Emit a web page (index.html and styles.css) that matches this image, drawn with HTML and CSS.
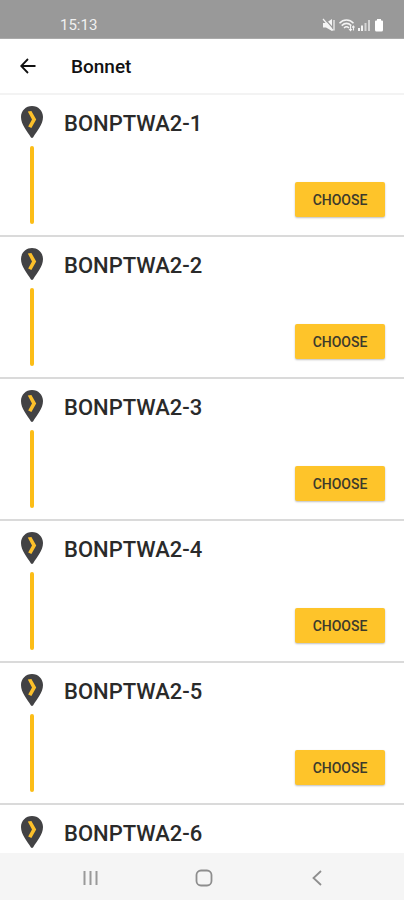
FILE: index.html
```html
<!DOCTYPE html>
<html lang="en">
<head>
<meta charset="utf-8">
<meta name="viewport" content="width=device-width, initial-scale=1">
<title>Bonnet</title>
<link rel="stylesheet" href="styles.css">
</head>
<body>
<svg class="defs" aria-hidden="true">
  <symbol id="pin" viewBox="0 0 22 32">
    <path d="M11 0C4.800 0 0 4.900 0 11c0 7.500 6 14 9.800 20.200q1.200 1.600 2.400 0C16 25 22 18.500 22 11 22 4.900 17.200 0 11 0z" fill="#424244"/>
    <path d="M6.800 5.500l3.600-.5 4.800 8.500-4.800 8.500-3.200-1.500 3.800-7z" fill="#fcc02a"/>
  </symbol>
</svg>
<div class="app">
  <div class="status">
    <span class="clock">15:13</span>
    <svg class="status-icons" viewBox="0 0 62 16" aria-hidden="true">
      <path d="M1 6h3l6-4v12l-6-3.500H1z" fill="#f4f4f4"/>
      <path d="M2 1l10 11.500" stroke="#999" stroke-width="1.200"/>
      <path d="M1 2l10 11.500M12 3v10.500" stroke="#f4f4f4" stroke-width="1.200" fill="none"/>
      <path d="M17.500 6.200c4-4.200 10-4.200 14 0M19.700 8.600c3-2.800 6.600-2.800 9.600 0M22 11c1.500-1.400 3.500-1.400 5 0" stroke="#f4f4f4" stroke-width="1.500" fill="none"/>
      <path d="M28.500 8v5.500M27 12l1.500 1.700L30 12M31.500 13.500V9M30 10.500L31.500 9l1 1.500" stroke="#f4f4f4" stroke-width="1.100" fill="none"/>
      <path d="M36 11h2v3h-2zM39 8.500h2V14h-2z" fill="#f4f4f4"/>
      <path d="M42.500 6h2v8h-2zM46 3h2v11h-2z" fill="#d4d4d4"/>
      <path d="M55 2h4v1.500h1q1 0 1 1V13q0 1.500-1.500 1.500h-5Q53 14.500 53 13V4.500q0-1 1-1h1z" fill="#fff"/>
    </svg>
  </div>
  <header class="bar">
    <button class="back" type="button" aria-label="Back">
      <svg viewBox="0 0 16 16" aria-hidden="true"><path d="M15.500 8H1.500M8 1L1.200 8 8 15" fill="none" stroke="#111" stroke-width="1.800"/></svg>
    </button>
    <h1>Bonnet</h1>
  </header>
  <main class="list">
    <section class="item">
      <div class="rail"><svg class="pin"><use href="#pin"/></svg><span class="line"></span></div>
      <h2>BONPTWA2-1</h2><button class="choose" type="button">CHOOSE</button>
    </section>
    <section class="item">
      <div class="rail"><svg class="pin"><use href="#pin"/></svg><span class="line"></span></div>
      <h2>BONPTWA2-2</h2><button class="choose" type="button">CHOOSE</button>
    </section>
    <section class="item">
      <div class="rail"><svg class="pin"><use href="#pin"/></svg><span class="line"></span></div>
      <h2>BONPTWA2-3</h2><button class="choose" type="button">CHOOSE</button>
    </section>
    <section class="item">
      <div class="rail"><svg class="pin"><use href="#pin"/></svg><span class="line"></span></div>
      <h2>BONPTWA2-4</h2><button class="choose" type="button">CHOOSE</button>
    </section>
    <section class="item">
      <div class="rail"><svg class="pin"><use href="#pin"/></svg><span class="line"></span></div>
      <h2>BONPTWA2-5</h2><button class="choose" type="button">CHOOSE</button>
    </section>
    <section class="item">
      <div class="rail"><svg class="pin"><use href="#pin"/></svg></div>
      <h2>BONPTWA2-6</h2>
    </section>
  </main>
  <nav class="nav">
    <button type="button" aria-label="Recent apps"><svg viewBox="0 0 18 18"><path d="M2.500 2v14M8.500 2v14M14.500 2v14" stroke="#999" stroke-width="2"/></svg></button>
    <button type="button" aria-label="Home"><svg viewBox="0 0 18 18"><rect x="1.500" y="1.500" width="15" height="15" rx="4.500" fill="none" stroke="#8e8e8e" stroke-width="1.800"/></svg></button>
    <button type="button" aria-label="Go back"><svg viewBox="0 0 18 18"><path d="M13 2L5.500 9l7.500 7" fill="none" stroke="#8e8e8e" stroke-width="1.800"/></svg></button>
  </nav>
</div>
</body>
</html>
```
FILE: styles.css
```css
* { box-sizing: border-box; }

body {
  margin: 0;
  background: #fff;
  font-family: Roboto, "Liberation Sans", sans-serif;
}

button {
  border: 0;
  padding: 0;
  background: none;
  font-family: inherit;
}

svg { display: block; }

.defs {
  position: absolute;
  width: 0;
  height: 0;
}

.app {
  display: flex;
  flex-direction: column;
  height: 100vh;
  overflow: hidden;
}

.status {
  display: flex;
  align-items: center;
  justify-content: space-between;
  padding: 12px 20px 0 60px;
  height: 39px;
  flex: none;
  background: #999;
  border-bottom: 1px solid #aaa;
}

.clock {
  color: #f0f0f0;
  font-size: 15px;
  font-weight: 400;
}

.status-icons {
  width: 62px;
  height: 16px;
}

.bar {
  display: flex;
  align-items: center;
  gap: 35px;
  padding: 0 20px;
  height: 56px;
  flex: none;
  border-bottom: 2px solid #f3f3f3;
}

.back svg {
  width: 16px;
  height: 16px;
}

.bar h1 {
  margin: 0;
  color: #111;
  font-size: 19px;
  font-weight: 500;
}

.list {
  flex: 1;
  min-height: 0;
  overflow: hidden;
}

.item {
  display: grid;
  grid-template-columns: 24px 1fr auto;
  column-gap: 20px;
  height: 142px;
  padding: 11px 19px 0 20px;
  border-bottom: 2px solid #dadada;
}

.rail {
  display: flex;
  flex-direction: column;
  align-items: center;
  gap: 8px;
}

.pin {
  width: 22px;
  height: 32px;
}

.line {
  width: 4px;
  height: 78px;
  border-radius: 2px;
  background: #fcbd17;
}

.item h2 {
  margin: 5px 0 0;
  color: #2a2a2a;
  font-size: 22px;
  line-height: 26px;
  font-weight: 500;
}

.choose {
  align-self: end;
  width: 90px;
  height: 35px;
  margin-bottom: 18px;
  border-radius: 2px;
  background: #fec42a;
  box-shadow: 0 1px 2px rgba(0, 0, 0, 0.25);
  color: #3c3a2c;
  font-size: 14px;
  font-weight: 500;
}

.nav {
  display: flex;
  justify-content: center;
  gap: 95px;
  align-items: center;
  height: 47px;
  padding: 2px 0 0 4px;
  flex: none;
  background: #f5f5f5;
}

.nav svg {
  width: 18px;
  height: 18px;
}
```
